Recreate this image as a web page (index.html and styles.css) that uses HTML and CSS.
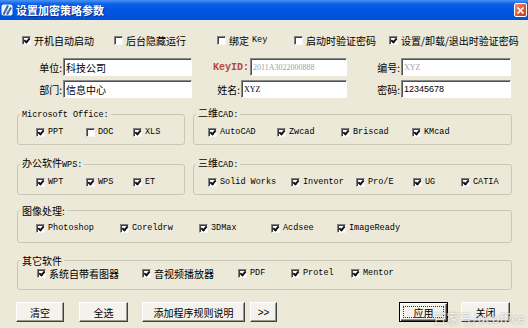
FILE: index.html
```html
<!DOCTYPE html>
<html lang="zh-CN">
<head>
    <meta charset="UTF-8">
    <title>设置加密策略参数</title>
    <link rel="stylesheet" href="styles.css">
</head>
<body>
<div class="window">
    <div class="titlebar">
        <svg class="app-icon" viewBox="0 0 12 12">
            <rect x="0.5" y="0.5" width="11" height="11" rx="2" fill="#eef2fa"/>
            <path d="M2.5 10.5 L7 1.5 M6 10.5 L10 3.5" stroke="#3a62a8" stroke-width="2" fill="none"/>
            <path d="M4 7 H8" stroke="#8aa0c8" stroke-width="1"/>
        </svg>
        <span class="title">设置加密策略参数</span>
        <span class="close-btn">
            <svg viewBox="0 0 9 9" width="9" height="9"><path d="M1.5 1.5 L7.5 7.5 M7.5 1.5 L1.5 7.5" stroke="#fff" stroke-width="1.7"/></svg>
        </span>
    </div>

    <div class="top-opts">
        <label class="opt"><span class="cb on"></span>开机自动启动</label>
        <label class="opt"><span class="cb"></span>后台隐藏运行</label>
        <label class="opt"><span class="cb"></span>绑定<span class="en">Key</span></label>
        <label class="opt"><span class="cb"></span>启动时验证密码</label>
        <label class="opt"><span class="cb on"></span>设置/卸载/退出时验证密码</label>
    </div>

    <div class="fields">
        <div class="field-row">
            <span class="lbl lbl-a">单位:</span>
            <input class="box box-a" type="text" value="科技公司">
            <span class="lbl lbl-key">KeyID:</span>
            <input class="box box-key serif dim" type="text" value="2011A3022000888" disabled>
            <span class="lbl lbl-c">编号:</span>
            <input class="box box-c serif dim" type="text" value="XYZ" disabled>
        </div>
        <div class="field-row">
            <span class="lbl lbl-a">部门:</span>
            <input class="box box-a" type="text" value="信息中心">
            <span class="lbl lbl-name">姓名:</span>
            <input class="box box-name serif" type="text" value="XYZ">
            <span class="lbl lbl-c">密码:</span>
            <input class="box box-c digits" type="text" value="12345678">
        </div>
    </div>

    <div class="groups-row first">
        <fieldset class="group half office">
            <legend><span class="en">Microsoft Office:</span></legend>
            <div class="opts">
                <label class="opt"><span class="cb on"></span><span class="en">PPT</span></label>
                <label class="opt"><span class="cb"></span><span class="en">DOC</span></label>
                <label class="opt"><span class="cb on"></span><span class="en">XLS</span></label>
            </div>
        </fieldset>
        <fieldset class="group wide cad2">
            <legend>二维<span class="en">CAD:</span></legend>
            <div class="opts">
                <label class="opt"><span class="cb on"></span><span class="en">AutoCAD</span></label>
                <label class="opt"><span class="cb on"></span><span class="en">Zwcad</span></label>
                <label class="opt"><span class="cb on"></span><span class="en">Briscad</span></label>
                <label class="opt"><span class="cb on"></span><span class="en">KMcad</span></label>
            </div>
        </fieldset>
    </div>

    <div class="groups-row">
        <fieldset class="group half office">
            <legend>办公软件<span class="en">WPS:</span></legend>
            <div class="opts">
                <label class="opt"><span class="cb on"></span><span class="en">WPT</span></label>
                <label class="opt"><span class="cb on"></span><span class="en">WPS</span></label>
                <label class="opt"><span class="cb on"></span><span class="en">ET</span></label>
            </div>
        </fieldset>
        <fieldset class="group wide cad3">
            <legend>三维<span class="en">CAD:</span></legend>
            <div class="opts">
                <label class="opt"><span class="cb on"></span><span class="en">Solid Works</span></label>
                <label class="opt"><span class="cb on"></span><span class="en">Inventor</span></label>
                <label class="opt"><span class="cb on"></span><span class="en">Pro/E</span></label>
                <label class="opt"><span class="cb on"></span><span class="en">UG</span></label>
                <label class="opt"><span class="cb on"></span><span class="en">CATIA</span></label>
            </div>
        </fieldset>
    </div>

    <fieldset class="group full image">
        <legend>图像处理:</legend>
        <div class="opts">
            <label class="opt"><span class="cb on"></span><span class="en">Photoshop</span></label>
            <label class="opt"><span class="cb on"></span><span class="en">Coreldrw</span></label>
            <label class="opt"><span class="cb on"></span><span class="en">3DMax</span></label>
            <label class="opt"><span class="cb on"></span><span class="en">Acdsee</span></label>
            <label class="opt"><span class="cb on"></span><span class="en">ImageReady</span></label>
        </div>
    </fieldset>

    <fieldset class="group full other">
        <legend>其它软件</legend>
        <div class="opts">
            <label class="opt"><span class="cb on"></span>系统自带看图器</label>
            <label class="opt"><span class="cb on"></span>音视频播放器</label>
            <label class="opt"><span class="cb on"></span><span class="en">PDF</span></label>
            <label class="opt"><span class="cb on"></span><span class="en">Protel</span></label>
            <label class="opt"><span class="cb on"></span><span class="en">Mentor</span></label>
        </div>
    </fieldset>

    <div class="buttons">
        <button class="btn btn-clear">清空</button>
        <button class="btn btn-all">全选</button>
        <button class="btn btn-rules">添加程序规则说明</button>
        <button class="btn btn-more">&gt;&gt;</button>
        <button class="btn btn-apply default">应用</button>
        <button class="btn btn-close">关闭</button>
    </div>

    <div class="watermark">百家号/ucoffice</div>
</div>
</body>
</html>
```

FILE: styles.css
```css
* {
    box-sizing: border-box;
}
body {
    margin: 0;
    width: 528px;
    height: 328px;
    overflow: hidden;
    background: #ece9d8;
    color: #000;
    font-family: "Noto Sans CJK SC", "Noto Sans", sans-serif;
    font-size: 10px;
}
.window {
    position: relative;
    height: 328px;
}

/* title bar */
.titlebar {
    height: 20px;
    display: flex;
    align-items: center;
    padding-left: 1px;
    background: linear-gradient(#4a94f8, #0c5fe6 4px, #0055e4 11px, #0051d8);
    color: #fff;
}
.app-icon {
    width: 12px;
    height: 12px;
    flex: none;
}
.title {
    flex: 1;
    margin-left: 3px;
    font-size: 11px;
    font-weight: bold;
    text-shadow: 1px 1px #0b2d8c;
}
.close-btn {
    width: 13px;
    height: 14px;
    margin-right: 1px;
    display: flex;
    align-items: center;
    justify-content: center;
    border: 1px solid #fff;
    border-radius: 2px;
    background: linear-gradient(135deg, #ec9272, #d95a35 55%, #c03a18);
}

/* checkbox options */
.opt {
    display: flex;
    align-items: center;
    gap: 3px;
    height: 11px;
    line-height: 11px;
    white-space: nowrap;
    flex: none;
}
.cb {
    position: relative;
    width: 9px;
    height: 9px;
    flex: none;
    background: #fff;
    border: 1px solid;
    border-color: #808080 #f6f6f6 #f6f6f6 #808080;
    box-shadow: inset 1px 1px #404040;
}
.cb.on::after {
    content: "";
    position: absolute;
    left: 2px;
    top: 0;
    width: 2px;
    height: 4px;
    border: solid #111;
    border-width: 0 2px 2px 0;
    transform: rotate(40deg);
}
.en {
    font-family: "Liberation Mono", monospace;
    font-size: 8.5px;
    color: #000;
}
.top-opts {
    display: flex;
    margin-top: 15px;
    padding-left: 22px;
}
.top-opts .opt:nth-child(1) { width: 92px; }
.top-opts .opt:nth-child(2) { width: 103px; }
.top-opts .opt:nth-child(3) { width: 77px; }
.top-opts .opt:nth-child(4) { width: 95px; }

/* text fields */
.fields {
    margin-top: 12px;
}
.field-row {
    display: flex;
    align-items: center;
    height: 18px;
}
.field-row + .field-row {
    margin-top: 4px;
}
.lbl {
    flex: none;
    text-align: right;
    padding-right: 1px;
}
.lbl-a { width: 63px; }
.lbl-key {
    width: 58px;
    color: #b0483f;
    font-family: "Liberation Mono", monospace;
    font-size: 10px;
    font-weight: bold;
}
.lbl-name { width: 49px; }
.lbl-c { width: 54px; }
.box {
    height: 18px;
    margin: 0;
    padding: 0 2px;
    background: #fff;
    border: 1px solid;
    border-color: #8a8a8a #fff #fff #8a8a8a;
    box-shadow: inset 1px 1px #505050;
    font-family: "Noto Sans CJK SC", sans-serif;
    font-size: 10px;
    color: #000;
    outline: none;
}
.box-a { width: 129px; }
.box-key { width: 97px; }
.box-name { width: 106px; }
.box-c { width: 110px; }
.box.serif {
    font-family: "Liberation Serif", serif;
    font-size: 8px;
}
.box.dim {
    color: #a0a0a0;
    background: #fff;
}
.box.digits {
    font-family: "Liberation Sans", sans-serif;
    font-size: 9px;
}

/* group boxes */
.groups-row {
    display: flex;
    gap: 8px;
    margin-top: 12px;
    padding-left: 17px;
}
.groups-row.first {
    margin-top: 9px;
}
.group {
    margin: 0;
    padding: 0 0 6px 2px;
    min-width: 0;
    border: 1px solid #cac7b6;
    border-radius: 3px;
}
.group legend {
    padding: 0 2px;
    font-size: 10px;
    line-height: 11px;
}
.group .opts {
    display: flex;
    margin-top: 6px;
}
.half { width: 168px; }
.wide { width: 319px; }
.full {
    width: 495px;
    margin-left: 17px;
}
.office .opts { padding-left: 16px; }
.office .opt:nth-child(1) { width: 50px; }
.office .opt:nth-child(2) { width: 47px; }
.cad2 .opts,
.cad3 .opts { padding-left: 12px; }
.cad2 .opt:nth-child(1) { width: 69px; }
.cad2 .opt:nth-child(2) { width: 64px; }
.cad2 .opt:nth-child(3) { width: 71px; }
.cad3 .opt:nth-child(1) { width: 83px; }
.cad3 .opt:nth-child(2) { width: 65px; }
.cad3 .opt:nth-child(3) { width: 57px; }
.cad3 .opt:nth-child(4) { width: 48px; }
.image {
    margin-top: 10px;
    padding-bottom: 8px;
}
.image .opts {
    margin-top: 7px;
    padding-left: 16px;
}
.image .opt:nth-child(1) { width: 84px; }
.image .opt:nth-child(2) { width: 79px; }
.image .opt:nth-child(3) { width: 72px; }
.image .opt:nth-child(4) { width: 66px; }
.other {
    margin-top: 12px;
    padding-bottom: 10px;
}
.other .opts {
    margin-top: 2px;
    padding-left: 17px;
}
.other .opt:nth-child(1) { width: 105px; }
.other .opt:nth-child(2) { width: 96px; }
.other .opt:nth-child(3) { width: 53px; }
.other .opt:nth-child(4) { width: 60px; }

/* buttons */
.buttons {
    display: flex;
    margin-top: 12px;
    padding: 0 18px 0 16px;
}
.btn {
    position: relative;
    height: 20px;
    padding: 0;
    background: #f3f2ec;
    border: 1px solid;
    border-color: #fff #404040 #404040 #fff;
    box-shadow: inset -1px -1px #9a9890;
    font-family: "Noto Sans CJK SC", sans-serif;
    font-size: 10px;
    color: #000;
}
.btn-clear { width: 48px; }
.btn-all { width: 49px; margin-left: 15px; }
.btn-rules { width: 103px; margin-left: 14px; }
.btn-more {
    width: 27px;
    margin-left: 5px;
    font-family: "Liberation Sans", sans-serif;
}
.btn-apply { width: 49px; margin-left: auto; }
.btn-close { width: 49px; margin-left: 13px; }
.btn.default {
    border: 1px solid #000;
    box-shadow: inset 1px 1px #fff, inset -1px -1px #404040, inset -2px -2px #9a9890;
}
.btn.default::after {
    content: "";
    position: absolute;
    inset: 3px;
    border: 1px dotted #333;
}

.watermark {
    position: absolute;
    right: 3px;
    bottom: 4px;
    font-family: "Noto Sans CJK SC", "Noto Sans", sans-serif;
    font-size: 13px;
    line-height: 13px;
    color: rgba(255, 255, 255, 0.8);
    text-shadow: 0 0 2px rgba(60, 60, 60, 0.45);
}
```
